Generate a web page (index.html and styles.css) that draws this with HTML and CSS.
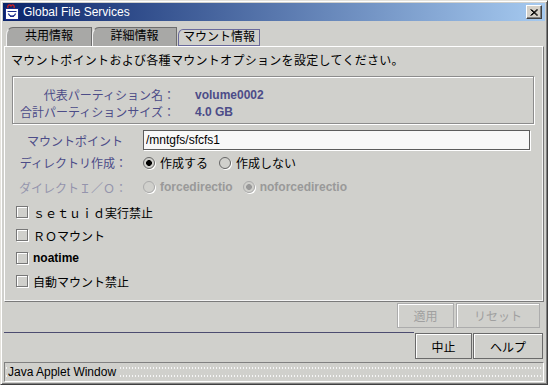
FILE: index.html
```html
<!DOCTYPE html>
<html lang="ja">
<head>
<meta charset="UTF-8" />
<title>Global File Services</title>
<link rel="stylesheet" href="styles.css">
</head>
<body>

<div class="window">
  <div class="titlebar">
    <svg class="app-icon" width="16" height="16" viewBox="0 0 16 16">
      <rect x="1.5" y="4.5" width="13" height="11" fill="#fff" stroke="#1a2a8a" />
      <path d="M4 4 C3 1, 6 0, 7 2 C8 0, 11 1, 10 4" fill="none" stroke="#d02020" stroke-width="1.3" />
      <path d="M3.5 7.5 H12.5 M4.5 9.5 C5 13, 11 13, 11.5 9.5 M6 12.5 H10" fill="none" stroke="#1a2a8a" stroke-width="1.2" />
    </svg>
    <span class="title">Global File Services</span>
    <div class="close">
      <svg width="8" height="7" viewBox="0 0 8 7">
        <path d="M0.5 0.5 L7 6.5 M1.5 0.5 L8 6.5 M7 0.5 L0.5 6.5 M8 0.5 L1.5 6.5" stroke="#000" stroke-width="1" />
      </svg>
    </div>
  </div>

  <div class="tabs">
    <div class="tab tab-first">共用情報</div>
    <div class="tab tab-second">詳細情報</div>
    <div class="tab tab-active">マウント情報</div>
  </div>

  <div class="panel">
    <p class="desc">マウントポイントおよび各種マウントオプションを設定してください。</p>

    <div class="info">
      <span class="info-label">代表パーティション名：</span>
      <span class="info-value">volume0002</span>
      <span class="info-label">合計パーティションサイズ：</span>
      <span class="info-value">4.0 GB</span>
    </div>

    <div class="form">
      <span class="label label-mount">マウントポイント</span>
      <input class="field" type="text" value="/mntgfs/sfcfs1">

      <span class="label">ディレクトリ作成：</span>
      <div class="radio-group">
        <span class="radio checked"></span><span class="option">作成する</span>
        <span class="radio"></span><span class="option">作成しない</span>
      </div>

      <span class="label disabled">ダイレクトＩ／Ｏ：</span>
      <div class="radio-group disabled">
        <span class="radio"></span><span class="option bold">forcedirectio</span>
        <span class="radio checked"></span><span class="option bold">noforcedirectio</span>
      </div>

      <div class="check-row"><span class="checkbox"></span>ｓｅｔｕｉｄ実行禁止</div>
      <div class="check-row"><span class="checkbox"></span>ＲＯマウント</div>
      <div class="check-row"><span class="checkbox"></span><b>noatime</b></div>
      <div class="check-row"><span class="checkbox"></span>自動マウント禁止</div>
    </div>
  </div>

  <div class="actions">
    <div class="btn btn-apply disabled">適用</div>
    <div class="btn btn-reset disabled">リセット</div>
  </div>

  <div class="footer">
    <div class="sep"></div>
    <div class="btn btn-cancel">中止</div>
    <div class="btn btn-help">ヘルプ</div>
  </div>

  <div class="status"><span class="status-text">Java Applet Window</span></div>
</div>

</body>
</html>
```

FILE: styles.css
```css
* {
  box-sizing: border-box;
}
body {
  margin: 0;
  width: 548px;
  height: 385px;
  overflow: hidden;
  font-family: "Liberation Sans", "Noto Sans CJK JP", sans-serif;
  font-size: 12px;
  color: #000;
}
.window {
  width: 548px;
  height: 385px;
  display: flex;
  flex-direction: column;
  background: #d0d0cc;
  border: 1px solid;
  border-color: #e4e2dc #404040 #404040 #e4e2dc;
  box-shadow: inset 1px 1px 0 #fff, inset -1px -1px 0 #808080;
  padding: 2px;
}
.titlebar {
  height: 18px;
  display: flex;
  align-items: center;
  padding: 0 3px 0 1px;
  background: linear-gradient(to right, #0a246a, #a6caf0);
  color: #fff;
}
.app-icon {
  flex: none;
}
.title {
  flex: 1;
  margin-left: 3px;
  font-size: 12px;
}
.close {
  width: 16px;
  height: 14px;
  display: flex;
  align-items: center;
  justify-content: center;
  background: #d4d0c8;
  border: 1px solid;
  border-color: #fff #404040 #404040 #fff;
  box-shadow: inset -1px -1px 0 #808080;
}
.tabs {
  height: 19px;
  margin: 6px 0 0 3px;
  display: flex;
  align-items: flex-end;
}
.tab {
  height: 19px;
  line-height: 17px;
  text-align: center;
  background: #a8a8a6;
  border: 1px solid #6e6e6e;
  border-bottom: none;
  border-left-color: #f4f4f4;
  border-top-left-radius: 7px 8px;
}
.tab-first {
  width: 86px;
}
.tab-second {
  width: 85px;
}
.tab-active {
  width: 82px;
  height: 17px;
  line-height: 14px;
  margin-left: 1px;
  background: #d0d0cc;
  border: 1px solid #6a6a9c;
  border-top-left-radius: 5px 6px;
}
.panel {
  height: 256px;
  margin: 0 1px;
  border: 1px solid;
  border-color: #fff #7a7a7a #7a7a7a #fff;
  box-shadow: inset -1px -1px 0 #f4f4f4;
}
.desc {
  margin: 6px 0 0 6px;
  line-height: 16px;
  letter-spacing: 0.3px;
}
.info {
  width: 522px;
  height: 48px;
  margin: 7px 0 0 7px;
  padding-top: 9px;
  display: grid;
  grid-template-columns: 162px auto;
  grid-auto-rows: 17px;
  column-gap: 20px;
  align-items: center;
  border: 1px solid #8c8c8c;
  box-shadow: 1px 1px 0 #fff, inset 1px 1px 0 #fff;
  color: #4c4c88;
}
.info-label {
  text-align: right;
}
.info-value {
  font-weight: bold;
}
.form {
  margin-top: 5px;
  display: grid;
  grid-template-columns: 122px 387px;
  grid-template-rows: 22px 23px 26px 24px 22px 23px 24px;
  column-gap: 16px;
  align-items: center;
}
.label {
  text-align: right;
  color: #4c4c88;
}
.label-mount {
  padding-right: 4px;
}
.label.disabled {
  color: #9494ac;
}
.field {
  width: 387px;
  height: 20px;
  margin: 0;
  padding: 0 2px;
  font: 12px "Liberation Sans", sans-serif;
  color: #000;
  background: #f8f8f8;
  border: 1px solid #5c5c5c;
  box-shadow: 1px 1px 0 #fff;
}
.radio-group {
  display: flex;
  align-items: center;
}
.radio {
  width: 12px;
  height: 12px;
  margin-right: 5px;
  border-radius: 50%;
  border: 1px solid #666;
  box-shadow: 1px 1px 0 #fff;
}
.radio.checked {
  background: radial-gradient(circle, #000 2.6px, transparent 3.2px);
}
.option {
  margin-right: 11px;
}
.bold {
  font-weight: bold;
}
.radio-group.disabled {
  color: #999;
}
.radio-group.disabled .radio {
  border-color: #aaa;
}
.radio-group.disabled .radio.checked {
  background: radial-gradient(circle, #999 2.6px, transparent 3.2px);
}
.radio-group.disabled .option {
  margin-right: 10px;
}
.check-row {
  grid-column: 1 / -1;
  padding-left: 11px;
  display: flex;
  align-items: center;
  gap: 5px;
}
.checkbox {
  width: 12px;
  height: 12px;
  border: 1px solid #777;
  box-shadow: 1px 1px 0 #fff, inset 1px 1px 0 #fff;
}
.actions {
  height: 25px;
  margin: 1px 5px 0 0;
  display: flex;
  justify-content: flex-end;
  gap: 2px;
}
.btn {
  height: 100%;
  display: flex;
  align-items: center;
  justify-content: center;
  border: 1px solid #6a6a6a;
  box-shadow: inset 1px 1px 0 #fff;
}
.btn.disabled {
  color: #a0a0a0;
  border-color: #acacac;
}
.btn-apply {
  width: 57px;
}
.btn-reset {
  width: 84px;
}
.footer {
  height: 27px;
  margin: 4px 2px 0 1px;
  display: flex;
  align-items: flex-start;
  gap: 1px;
}
.footer .btn {
  height: 26px;
  margin-top: 1px;
}
.sep {
  flex: 1;
  border-top: 1px solid #4c4c70;
}
.btn-cancel {
  width: 57px;
}
.btn-help {
  width: 70px;
}
.status {
  height: 20px;
  margin: 3px 1px 0;
  padding-left: 3px;
  line-height: 18px;
  border: 1px solid;
  border-color: #808080 #fff #fff #808080;
  background-image: radial-gradient(circle, #f6f6f6 0.7px, transparent 0.9px);
  background-size: 3px 8px;
  background-position: 0 1px;
}
.status-text {
  background: #d0d0cc;
  padding-right: 2px;
}
```
